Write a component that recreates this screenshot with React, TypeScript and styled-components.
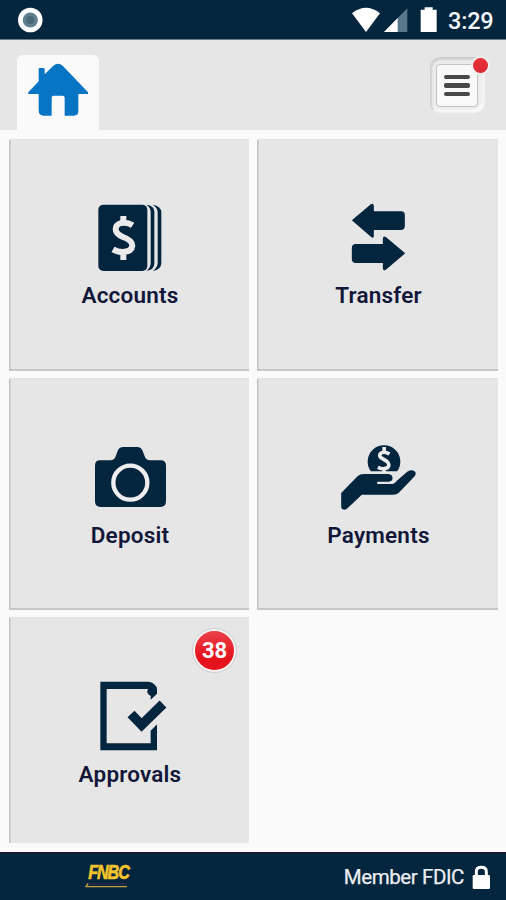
import React from "react";
import styled, { createGlobalStyle } from "styled-components";

const navy = "#03253e";

const GlobalStyle = createGlobalStyle`
  * { box-sizing: border-box; }
  body { margin: 0; background: #fafafa; font-family: Roboto, "Liberation Sans", sans-serif; }
`;

const Screen = styled.div`
  width: 506px;
  height: 900px;
  display: flex;
  flex-direction: column;
  overflow: hidden;
  background: #fafafa;
`;

const StatusBar = styled.header`
  height: 40px;
  flex: none;
  display: flex;
  align-items: center;
  justify-content: space-between;
  padding: 0 12px 0 18px;
  background: ${navy};
  border-bottom: 1px solid #707885;
`;

const StatusIcons = styled.div`
  display: flex;
  align-items: center;
`;

const Clock = styled.span`
  width: 46px;
  margin-left: 10px;
  font-size: 23.5px;
  line-height: 28px;
  font-weight: 500;
  letter-spacing: -0.2px;
  color: #f4f7f9;
  padding-top: 2px;
`;

const NavBar = styled.nav`
  height: 90px;
  flex: none;
  display: flex;
  justify-content: space-between;
  align-items: flex-start;
  padding: 15px 20px 0 17px;
  background: #e6e6e6;
`;

const HomeTab = styled.div`
  width: 82px;
  height: 75px;
  border-radius: 6px 6px 0 0;
  background: #fafafa;
`;

const MenuWell = styled.div`
  position: relative;
  width: 55px;
  height: 56px;
  margin-top: 2px;
  margin-right: 1px;
  padding: 6px 5px;
  border-radius: 10px;
  background: #ececec;
  border: 1px solid #f2f2f2;
  border-top-color: #c8c8c8;
  border-left-color: #d0d0d0;
  box-shadow: inset 1px 2px 2px #d2d2d2, inset -2px -3px 2px #f7f7f7;
`;

const MenuButton = styled.div`
  width: 42px;
  height: 43px;
  display: flex;
  flex-direction: column;
  align-items: center;
  justify-content: center;
  gap: 4px;
  border-radius: 4px;
  border: 1px solid #c3c3c3;
  background: #f9f9f9;
`;

const MenuLine = styled.span`
  width: 26px;
  height: 4.5px;
  border-radius: 2px;
  background: #484848;
`;

const AlertDot = styled.span`
  position: absolute;
  top: -2px;
  right: -6px;
  width: 19px;
  height: 19px;
  border-radius: 50%;
  border: 2px solid #f5eeee;
  background: linear-gradient(#e83039, #db2934);
`;

const TileGrid = styled.main`
  flex: 1;
  display: grid;
  grid-template-columns: 240px 241px;
  grid-template-rows: 232px 232px 226px;
  column-gap: 8px;
  row-gap: 7px;
  padding: 9px 8px 0 9px;
`;

const TileBox = styled.section<{ $clipped?: boolean }>`
  position: relative;
  display: flex;
  flex-direction: column;
  align-items: center;
  padding-top: 55px;
  background: #e6e6e6;
  border-top: 1px solid #e3e3e3;
  box-shadow: inset 1.5px 0 0 #c2c2c2
    ${(p) => (p.$clipped ? "" : ", inset 0 -2px 0 #c6c6c6")};
`;

const TileLabel = styled.span<{ $shift: number }>`
  margin-top: ${(p) => 2 + p.$shift}px;
  margin-left: 2px;
  font-size: 22.5px;
  line-height: 28px;
  font-weight: 600;
  letter-spacing: 0.2px;
  color: #121739;
`;

const Badge = styled.span`
  position: absolute;
  top: 11px;
  right: 13px;
  width: 43px;
  height: 43px;
  display: flex;
  align-items: center;
  justify-content: center;
  border-radius: 50%;
  border: 2.5px solid #f7f3f3;
  outline: 1px solid #cfcfcf;
  background: linear-gradient(#ea4048, #e5131c 70%);
  color: #fff;
  font-size: 22px;
  font-weight: 700;
`;

const Footer = styled.footer`
  height: 48px;
  flex: none;
  display: flex;
  align-items: center;
  justify-content: space-between;
  padding: 0 15px 0 84px;
  background: ${navy};
  border-top: 2px solid #1a1733;
`;

const Member = styled.div`
  display: flex;
  align-items: center;
  gap: 8px;
  font-size: 20.5px;
  line-height: 24px;
  letter-spacing: -0.42px;
  color: #eceef2;
  -webkit-text-stroke: 0.25px #eceef2;
`;

const HomeIcon = () => (
  <svg width="82" height="75" viewBox="51 165 246 225">
    <path
      fill="#0774c4"
      d="M85 282V277L116 244V208Q116 204 120 204H130Q134 204 134 208V223L160 197Q174 186 188 197L264 277V282H235V334Q235 347 222 347H194V293Q194 287 188 287H161Q155 287 155 293V347H131Q116 347 116 331V282Z"
    />
  </svg>
);

const AccountsIcon = () => (
  <svg width="120" height="84" viewBox="-3 0 360 252">
    <rect x="85" y="29" width="147" height="199" rx="15" fill={navy} />
    <path d="M229 29Q253 32 253 50V205Q253 225 229 228Q242 218 242 205V50Q242 38 229 29Z" fill={navy} />
    <path d="M248 29Q274 34 274 52V204Q274 224 248 228Q263 218 263 204V52Q263 39 248 29Z" fill={navy} />
    <path
      d="M188 91Q171 80 153 84Q137 89 137 103Q137 117 159 126Q187 136 187 152Q185 170 159 171Q142 171 129 163M160 63V84M160 170V195"
      fill="none"
      stroke="#ebebec"
      strokeWidth="18"
    />
  </svg>
);

const TransferIcon = () => (
  <svg width="120" height="84" viewBox="-5.5 1 360 252" fill={navy}>
    <path d="M96 77L153 29Q162 24 162 35V50H244Q255 50 255 61V94Q255 106 243 106H162V123Q162 133 153 126Z" />
    <path d="M256 176L199 128Q189 121 189 133V148H108Q96 148 96 160V193Q96 205 108 205H189V220Q189 231 198 225Z" />
  </svg>
);

const DepositIcon = () => (
  <svg width="120" height="84" viewBox="-3 -3 360 252">
    <path
      fill={navy}
      d="M90 76H121Q133 76 137 64L143 48Q147 36 160 36H201Q214 36 218 48L224 64Q228 76 240 76H272Q288 76 288 92V199Q288 216 271 216H92Q75 216 75 199V92Q75 76 90 76Z"
    />
    <circle cx="181" cy="143" r="51" fill="none" stroke="#eeeef0" strokeWidth="13" />
  </svg>
);

const PaymentsIcon = () => (
  <svg width="120" height="84" viewBox="-5.5 -3 360 252">
    <path fill={navy} d="M153 109A49 49 0 1 1 232 109Z" />
    <path
      d="M209 57Q196 49 186 53Q175 58 183 68L201 79Q212 89 203 98Q192 105 174 97M193 36V51M193 101V112"
      fill="none"
      stroke="#ebebec"
      strokeWidth="11"
    />
    <path
      fill={navy}
      d="M64 174L113 124Q120 117 132 117H206Q218 118 218 130Q218 140 206 140H172V147H214Q224 147 231 137L262 110Q280 101 287 112Q289 119 283 125L237 173Q231 179 219 179H126L83 220Q76 227 67 222Q64 220 64 214Z"
    />
  </svg>
);

const ApprovalsIcon = () => (
  <svg width="120" height="84" viewBox="-2 -5 360 252">
    <path
      fill={navy}
      d="M92 21H236Q245 21 250 26L258 33Q262 37 262 43V57L243 75V64Q228 56 235 43H111V206H243V168L262 149V227H92Z"
    />
    <path d="M184 118L216 151L280 88" fill="none" stroke={navy} strokeWidth="29" />
  </svg>
);

const LogoSvg = styled.svg`
  overflow: visible;
`;

const BankLogo = () => (
  <LogoSvg width="52" height="32" viewBox="252 79 156 96">
    <text
      x="265"
      y="132"
      textLength="121"
      lengthAdjust="spacingAndGlyphs"
      fontFamily="Liberation Sans"
      fontWeight="700"
      fontStyle="italic"
      fontSize="59"
      letterSpacing="-4"
      fill="#f4c42c"
      stroke="#f4c42c"
      strokeWidth="2"
    >
      FNBC
    </text>
    <path d="M264 148H379" stroke="#29294c" strokeWidth="5" />
    <path d="M264 146L258 156H381" fill="none" stroke="#c8a53a" strokeWidth="4" />
  </LogoSvg>
);

const tiles = [
  { label: "Accounts", Icon: AccountsIcon, shift: 0 },
  { label: "Transfer", Icon: TransferIcon, shift: 0 },
  { label: "Deposit", Icon: DepositIcon, shift: 1 },
  { label: "Payments", Icon: PaymentsIcon, shift: 1 },
  { label: "Approvals", Icon: ApprovalsIcon, shift: 1, badge: 38 },
];

export default function App() {
  return (
    <>
      <GlobalStyle />
      <Screen>
        <StatusBar>
          <svg width="25" height="26" viewBox="0 0 25 26">
            <circle cx="12.3" cy="13" r="12.3" fill="#fff" />
            <circle cx="12.3" cy="13" r="7.6" fill="#60808e" />
            <circle cx="12.3" cy="13" r="4" fill="#486978" />
          </svg>
          <StatusIcons>
            <svg width="86" height="26" viewBox="36 21 258 78">
              <path fill="#fff" d="M36 40Q78 7 120 40L78 96Z" />
              <path fill="#57788a" d="M202 25V96H132Z" />
              <path fill="#fff" d="M173 54V96H132Z" />
              <path fill="#fff" d="M242 29H254V22H278V29H290V96H242Z" />
            </svg>
            <Clock>3:29</Clock>
          </StatusIcons>
        </StatusBar>
        <NavBar>
          <HomeTab>
            <HomeIcon />
          </HomeTab>
          <MenuWell>
            <MenuButton>
              <MenuLine />
              <MenuLine />
              <MenuLine />
            </MenuButton>
            <AlertDot />
          </MenuWell>
        </NavBar>
        <TileGrid>
          {tiles.map(({ label, Icon, shift, badge }) => (
            <TileBox key={label} $clipped={badge !== undefined}>
              <Icon />
              <TileLabel $shift={shift}>{label}</TileLabel>
              {badge !== undefined && <Badge>{badge}</Badge>}
            </TileBox>
          ))}
        </TileGrid>
        <Footer>
          <BankLogo />
          <Member>
            Member FDIC
            <svg width="19" height="25" viewBox="426 86 57 75">
              <path d="M439 118V106Q439 93 454 93Q469 93 469 106V118" fill="none" stroke="#fff" strokeWidth="9" />
              <rect x="428" y="116" width="52" height="42" rx="4" fill="#fff" />
            </svg>
          </Member>
        </Footer>
      </Screen>
    </>
  );
}
